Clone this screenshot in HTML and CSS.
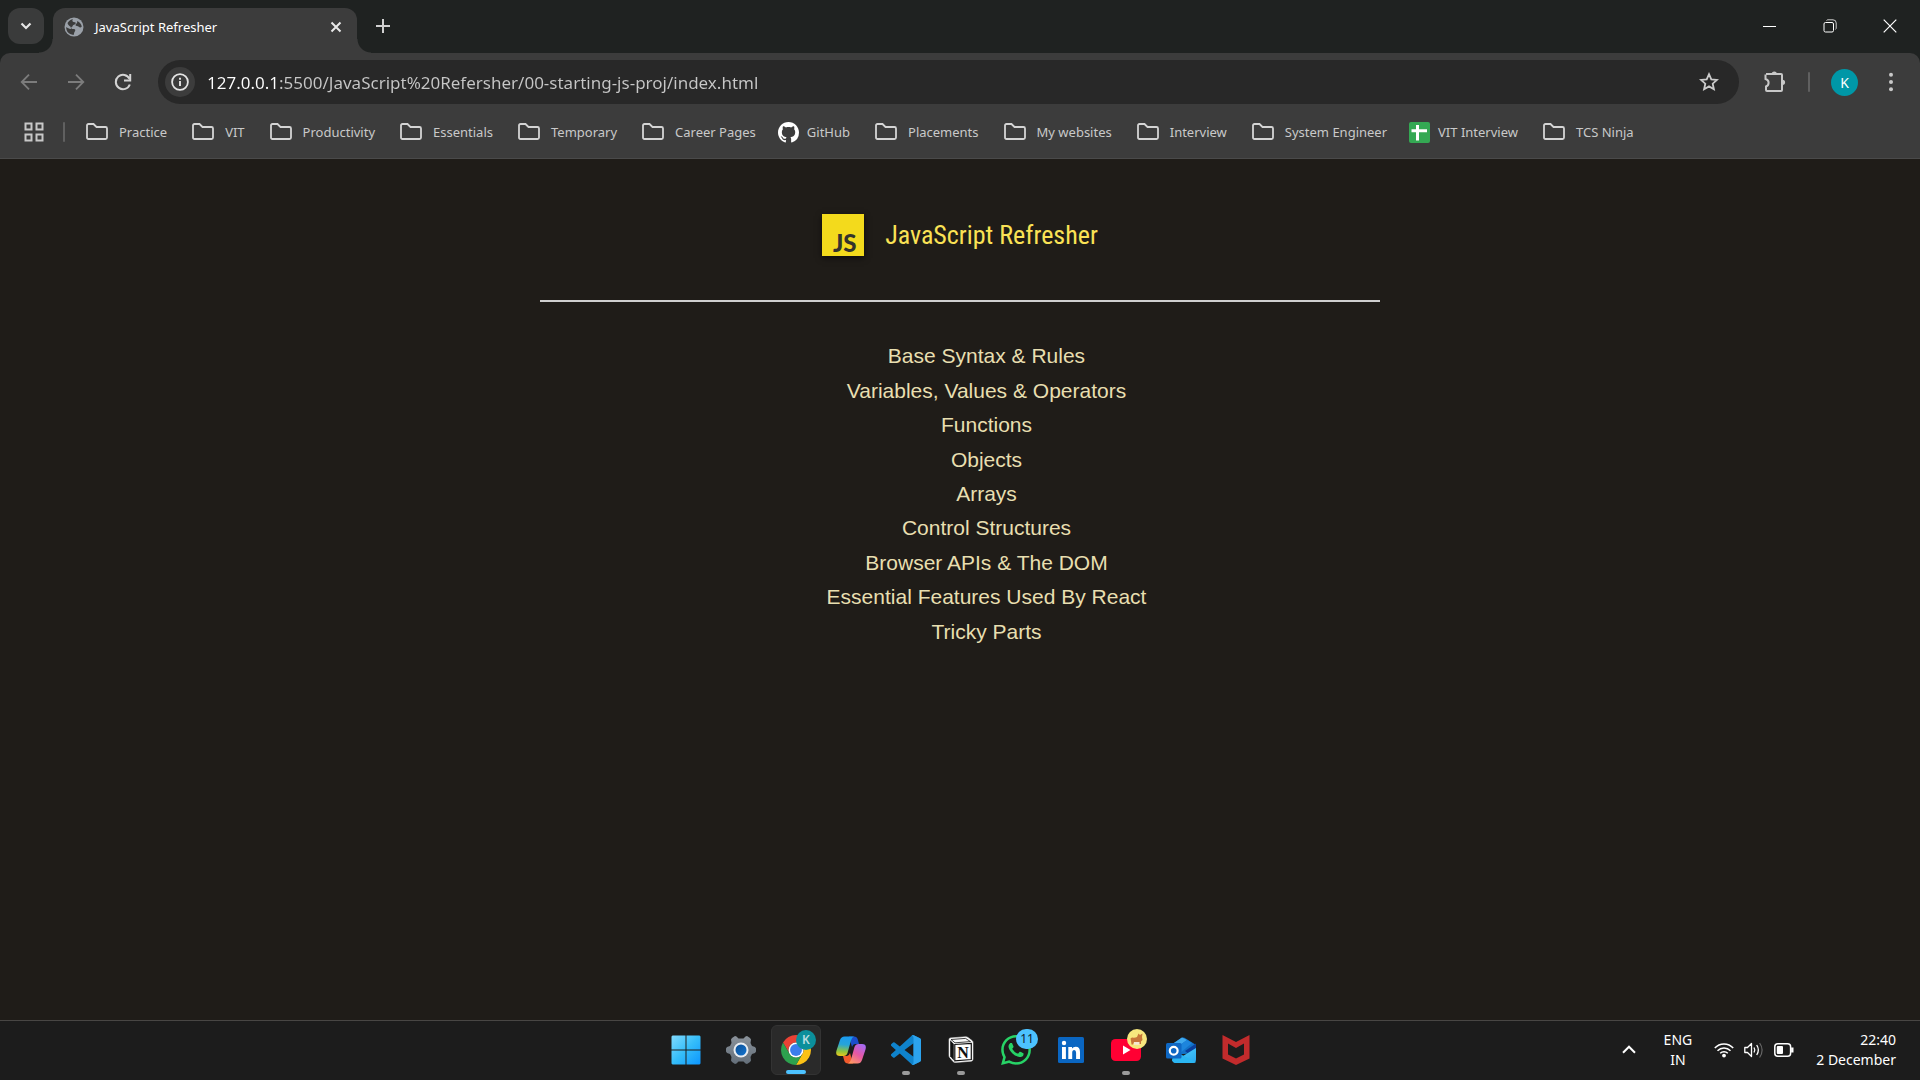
FILE: index.html
```html
<!DOCTYPE html>
<html lang="en">
<head>
<meta charset="utf-8">
<title>JavaScript Refresher</title>
<link rel="stylesheet" href="styles.css">
</head>
<body>
<svg class="defs" aria-hidden="true">
  <symbol id="folder" viewBox="0 0 28 22"><path d="M4 16.500V4.500Q4 3 5.500 3H10.500L13.500 6H22.500Q24 6 24 7.500V16.500Q24 18 22.500 18H5.500Q4 18 4 16.500Z" fill="none" stroke="#d4d4d4" stroke-width="1.800"/></symbol>
</svg>

<header class="browser">
  <div class="tabstrip">
    <button class="tab-search" aria-label="Search tabs"><svg width="12" height="8" viewBox="0 0 12 8"><path d="M1.500 1.500 6 6l4.500-4.500" fill="none" stroke="#e6e6e6" stroke-width="2.200"/></svg></button>
    <div class="tab">
      <svg width="20" height="20" viewBox="0 0 20 20"><circle cx="10" cy="10" r="9.500" fill="#9aa0a8"/><path d="M9 2.200C7.500 4 8.500 5 11 5.200c1.500.3.500 2.300-1 2.500-2 .2-.5 2-2.500 2.200-1.800.2-.5 2 1.500 2 3 0 2.500 1.500 1.500 3-.6 1-.2 2-1 3C4.500 17.500 2 14 2.200 10c2 1.200 4.500 3 5.500 1.200C7.500 9.500 4.500 9.500 3.500 6 5 3.500 7 2.400 9 2.200Z" fill="#3c3c3c"/><path d="M13 4c2 .5 4.500 3 4.800 5.500-1 1.500-2.300 1-3 .3-1-1-2.800-.5-3.300-1.500C11.500 6.500 14 6.500 13 4Z" fill="#3c3c3c"/></svg>
      <span class="tab-title">JavaScript Refresher</span>
      <button class="tab-close" aria-label="Close tab"><svg width="12" height="12" viewBox="0 0 12 12"><path d="M1.500 1.500l9 9m0-9l-9 9" stroke="#e8e8e8" stroke-width="2"/></svg></button>
    </div>
    <button class="new-tab" aria-label="New tab"><svg width="14" height="14" viewBox="0 0 14 14"><path d="M7 0v14M0 7h14" stroke="#d0d0d0" stroke-width="2"/></svg></button>
    <div class="window-controls">
      <button aria-label="Minimize"><svg width="14" height="14" viewBox="0 0 14 14"><path d="M0 7.500h13" stroke="#fff"/></svg></button>
      <button aria-label="Restore"><svg width="14" height="14" viewBox="0 0 14 14"><rect x="1" y="3.500" width="9.500" height="9.500" rx="1.500" fill="none" stroke="#fff"/><path d="M3.500 1.500Q4 .8 5 .8H10Q13.200.8 13.200 4V9q0 1-.8 1.500" fill="none" stroke="#ccc"/></svg></button>
      <button aria-label="Close"><svg width="14" height="14" viewBox="0 0 14 14"><path d="M.7.7l12.600 12.600m0-12.600L.7 13.300" stroke="#fff" stroke-width="1.200"/></svg></button>
    </div>
  </div>

  <div class="chrome-panel">
    <div class="toolbar">
      <nav class="history">
        <button aria-label="Back" disabled><svg width="18" height="18" viewBox="0 0 18 18"><path d="M17 9H2M9 1.700 1.700 9 9 16.300" fill="none" stroke="#7c7c7c" stroke-width="1.800"/></svg></button>
        <button aria-label="Forward" disabled><svg width="18" height="18" viewBox="0 0 18 18"><path d="M1 9h15M9 1.700 16.300 9 9 16.300" fill="none" stroke="#7c7c7c" stroke-width="1.800"/></svg></button>
        <button aria-label="Reload"><svg width="18" height="18" viewBox="0 0 18 18"><path d="M15.800 11.500A7.200 7.200 0 1 1 15.500 5.800" fill="none" stroke="#d4d4d4" stroke-width="2"/><path d="M16.200 1v6.500H10" fill="none" stroke="#d4d4d4" stroke-width="2"/></svg></button>
      </nav>
      <div class="omnibox">
        <button class="site-info" aria-label="View site information"><svg width="18" height="18" viewBox="0 0 18 18"><circle cx="9" cy="9" r="7.900" fill="none" stroke="#e4e4e4" stroke-width="1.800"/><path d="M9 8v5M9 4.700v2" stroke="#e4e4e4" stroke-width="1.900"/></svg></button>
        <input class="address" type="text" aria-label="Address" value="127.0.0.1:5500/JavaScript%20Refersher/00-starting-js-proj/index.html">
        <button class="star" aria-label="Bookmark this tab"><svg width="20" height="20" viewBox="0 0 20 20"><path d="M10 2.200l2.300 5.200 5.600.5-4.200 3.800 1.200 5.600L10 14.400l-4.900 2.900 1.200-5.600L2.100 7.900l5.600-.5Z" fill="none" stroke="#cbcbcb" stroke-width="1.800"/></svg></button>
      </div>
      <div class="actions">
        <button aria-label="Extensions"><svg width="22" height="24" viewBox="0 0 22 24"><path d="M2 4H17Q18 4 18 5V20Q18 21 17 21H3Q2 21 2 20V16.500Q4.600 15.500 4.600 12.700T1.500 9V4.500" fill="none" stroke="#c8c8c8" stroke-width="2"/><path d="M7.700 4a2.600 2.600 0 0 1 5.200 0ZM18.500 9.700a2.600 2.600 0 0 1 0 5.200Z" fill="#c8c8c8"/></svg></button>
        <span class="divider"></span>
        <button class="avatar" aria-label="Profile">K</button>
        <button class="menu" aria-label="Menu"><svg width="6" height="20" viewBox="0 0 6 20"><g fill="#c8c8c8"><circle cx="3" cy="2.700" r="2"/><circle cx="3" cy="10" r="2"/><circle cx="3" cy="17.300" r="2"/></g></svg></button>
      </div>
    </div>

    <nav class="bookmarks" aria-label="Bookmarks">
      <button class="apps" aria-label="Apps"><svg width="20" height="20" viewBox="0 0 20 20"><g fill="none" stroke="#c8c8c8" stroke-width="2"><rect x="1.500" y="1.500" width="6" height="6"/><rect x="12.500" y="1.500" width="6" height="6"/><rect x="1.500" y="12.500" width="6" height="6"/><rect x="12.500" y="12.500" width="6" height="6"/></g></svg></button>
      <span class="divider"></span>
      <div class="bookmark-list">
        <a href="#"><svg width="28" height="22"><use href="#folder"/></svg>Practice</a>
        <a href="#"><svg width="28" height="22"><use href="#folder"/></svg>VIT</a>
        <a href="#"><svg width="28" height="22"><use href="#folder"/></svg>Productivity</a>
        <a href="#"><svg width="28" height="22"><use href="#folder"/></svg>Essentials</a>
        <a href="#"><svg width="28" height="22"><use href="#folder"/></svg>Temporary</a>
        <a href="#"><svg width="28" height="22"><use href="#folder"/></svg>Career Pages</a>
        <a href="#"><svg width="21" height="21" viewBox="0 0 16 16"><path fill="#fff" d="M8 0C3.580 0 0 3.580 0 8c0 3.540 2.290 6.530 5.470 7.590.4.070.55-.17.55-.38 0-.19-.01-.82-.01-1.490-2.010.37-2.530-.49-2.690-.94-.09-.23-.48-.94-.82-1.130-.28-.15-.68-.52-.01-.53.63-.01 1.080.58 1.230.82.72 1.210 1.870.87 2.330.66.070-.52.280-.87.510-1.070-1.780-.2-3.640-.89-3.640-3.950 0-.87.310-1.590.82-2.150-.08-.2-.36-1.020.08-2.120 0 0 .67-.21 2.200.82.64-.18 1.320-.27 2-.27s1.360.09 2 .27c1.530-1.040 2.200-.82 2.200-.82.44 1.100.16 1.920.08 2.120.51.56.82 1.270.82 2.150 0 3.070-1.870 3.750-3.650 3.950.29.25.54.73.54 1.480 0 1.070-.01 1.930-.01 2.200 0 .21.15.46.55.38A8.010 8.010 0 0 0 16 8c0-4.420-3.580-8-8-8Z"/></svg>GitHub</a>
        <a href="#"><svg width="28" height="22"><use href="#folder"/></svg>Placements</a>
        <a href="#"><svg width="28" height="22"><use href="#folder"/></svg>My websites</a>
        <a href="#"><svg width="28" height="22"><use href="#folder"/></svg>Interview</a>
        <a href="#"><svg width="28" height="22"><use href="#folder"/></svg>System Engineer</a>
        <a href="#"><svg width="21" height="21" viewBox="0 0 21 21"><rect width="21" height="21" rx="2" fill="#34a853"/><path d="M8.500 3v15.500M2.500 8.700h15.500" stroke="#fff" stroke-width="3"/></svg>VIT Interview</a>
        <a href="#"><svg width="28" height="22"><use href="#folder"/></svg>TCS Ninja</a>
      </div>
    </nav>
  </div>
</header>

<main class="page">
  <div class="page-header">
    <svg class="js-logo" width="42" height="42" viewBox="0 0 42 42" role="img" aria-label="JavaScript logo"><rect width="42" height="42" fill="#f3da1c"/><text x="11" y="38" class="js-text">JS</text></svg>
    <h1>JavaScript Refresher</h1>
  </div>
  <ul class="topics">
    <li>Base Syntax &amp; Rules</li>
    <li>Variables, Values &amp; Operators</li>
    <li>Functions</li>
    <li>Objects</li>
    <li>Arrays</li>
    <li>Control Structures</li>
    <li>Browser APIs &amp; The DOM</li>
    <li>Essential Features Used By React</li>
    <li>Tricky Parts</li>
  </ul>
</main>

<footer class="taskbar">
  <div class="pinned">
    <button class="app" aria-label="Start"><svg width="30" height="30" viewBox="0 0 30 30"><defs><linearGradient id="win" gradientUnits="userSpaceOnUse" x1="0" y1="0" x2="30" y2="30"><stop offset="0" stop-color="#84dcff"/><stop offset=".5" stop-color="#35bdf9"/><stop offset="1" stop-color="#0a94ff"/></linearGradient></defs><path fill="url(#win)" d="M1.500.500h13v14h-14v-13zM15.500.500h13l1 1v13h-14zM.500 15.500h14v14h-13l-1-1zM15.500 15.500h14v13l-1 1h-13z"/></svg></button>
    <button class="app" aria-label="Settings"><svg width="32" height="32" viewBox="-16 -16 32 32"><defs><linearGradient id="gear" gradientUnits="userSpaceOnUse" x1="0" y1="-15" x2="0" y2="15"><stop offset="0" stop-color="#8b939b"/><stop offset="1" stop-color="#626d78"/></linearGradient><linearGradient id="hub" x1="0" y1="0" x2="1" y2="1"><stop offset="0" stop-color="#0c4f94"/><stop offset="1" stop-color="#1374cf"/></linearGradient></defs><path fill="url(#gear)" d="M-15 -1.500V1.500L-14 3-11 4-9.500 7-10 10.500-9 12-6 14-4.500 13.500-2.500 11.500H2.500L4.500 13.500 6 14 9 12 10 10.500 9.500 7 11 4 14 3 15 1.500V-1.500L14-3 11-4 9.500-7 10-10.500 9-12 6-14 4.500-13.500 2.500-11.500H-2.500L-4.500-13.500-6-14-9-12-10-10.500-9.500-7-11-4-14-3Z"/><circle r="7.500" fill="#e9edf1"/><circle r="5.500" fill="url(#hub)"/></svg></button>
    <button class="app active running" aria-label="Google Chrome"><svg width="30" height="30" viewBox="2 2 44 44"><path fill="#e94235" d="M43.050 13H24a11 11 0 0 0-9.530 16.500L4.950 13a22 22 0 0 1 38.100 0Z"/><path fill="#fbc116" d="M43.050 13A22 22 0 0 1 24 46l9.530-16.500A11 11 0 0 0 24 13Z"/><path fill="#2da14e" d="M24 46A22 22 0 0 1 4.950 13l9.520 16.500a11 11 0 0 0 19.060 0Z"/><circle cx="24" cy="24" r="11" fill="#fff"/><circle cx="24" cy="24" r="8.700" fill="#3b7ded"/></svg><span class="badge profile">K</span></button>
    <button class="app" aria-label="Copilot"><svg width="30" height="28" viewBox="0 0 30 28"><defs><linearGradient id="cpA" x1=".3" y1="0" x2=".2" y2="1"><stop offset="0" stop-color="#1a9bf0"/><stop offset=".4" stop-color="#27a4d8"/><stop offset=".75" stop-color="#8fc43e"/><stop offset="1" stop-color="#eec71a"/></linearGradient><linearGradient id="cpB" x1=".8" y1="0" x2=".2" y2="1"><stop offset="0" stop-color="#a56bf5"/><stop offset=".5" stop-color="#e657a4"/><stop offset="1" stop-color="#ff9a62"/></linearGradient></defs><path d="M13 .5h5q3 0 3.800 3L23 8h-4q-2 0-3 3Z" fill="#1b4ecb"/><path d="M17 27.500h-5q-3 0-3.800-3L7 20h4q2 0 3-3Z" fill="#f15a2c"/><path d="M8.500.5H18q-2 .5-3 4L11.500 17q-1 3-4 3H4Q-1 20 .500 14.500L4 4Q5.200.500 8.500.500Z" fill="url(#cpA)"/><path d="M21.500 27.500H12q2-.5 3-4L18.500 11q1-3 4-3H26q5 0 3.500 5.500L26 24q-1.200 3.500-4.500 3.500Z" fill="url(#cpB)"/></svg></button>
    <button class="app running" aria-label="Visual Studio Code"><svg width="30" height="30" viewBox="0 0 24 24"><path fill="#0f83cc" d="M23.150 2.587L18.210.210a1.494 1.494 0 0 0-1.705.290l-9.460 8.630-4.120-3.128a.999.999 0 0 0-1.276.057L.327 7.261A1 1 0 0 0 .326 8.740L3.899 12 .326 15.260a1 1 0 0 0 .001 1.479L1.650 17.940a.999.999 0 0 0 1.276.057l4.120-3.128 9.460 8.630a1.492 1.492 0 0 0 1.704.290l4.942-2.377A1.500 1.500 0 0 0 24 20.060V3.939a1.500 1.500 0 0 0-.850-1.352zm-5.146 14.861L10.826 12l7.178-5.448v10.896z"/><path fill="#2ca3ee" d="M18.210.210 23.150 2.587Q24 3 24 3.939V20.060Q24 21 23.150 21.400L18.210 23.790Q17.200 24.100 16.500 23.500 18 23.500 18 22V2Q18 .500 16.500.500 17.200-.100 18.210.210Z"/></svg></button>
    <button class="app running" aria-label="Notion"><svg width="26" height="28" viewBox="0 0 26 28"><path d="M1 3.500Q1 2 2.500 1.900L17.500.800Q19 .700 20 1.500L24 4.500Q25 5.300 25 6.500V23Q25 25 23.300 25.200L7.500 26.500Q6 26.600 5 25.500L1.700 21.500Q1 20.500 1 19.500Z" fill="#fff" stroke="#ddd" stroke-width=".6"/><path d="M3 3.500 17.500 2.400 22.500 5.600 7 6.800Z" fill="#f8f8f8" stroke="#111" stroke-width=".8"/><path d="M2.200 4.200 5.800 8V24.500L2.200 20.300Z" fill="#111"/><path d="M6.800 8.500 23.300 7.300V23.500L6.800 24.800Z" fill="#fff" stroke="#111" stroke-width="1.200"/><text x="15" y="21.500" class="notion-n">N</text></svg></button>
    <button class="app" aria-label="WhatsApp"><svg width="30" height="30" viewBox="0 0 24 24"><path fill="#27d366" d="M17.472 14.382c-.297-.149-1.758-.867-2.030-.967-.273-.099-.471-.148-.670.150-.197.297-.767.966-.940 1.164-.173.199-.347.223-.644.075-.297-.150-1.255-.463-2.390-1.475-.883-.788-1.480-1.761-1.653-2.059-.173-.297-.018-.458.130-.606.134-.133.298-.347.446-.520.149-.174.198-.298.298-.497.099-.198.050-.371-.025-.520-.075-.149-.669-1.612-.916-2.207-.242-.579-.487-.500-.669-.510-.173-.008-.371-.010-.570-.010-.198 0-.520.074-.792.372-.272.297-1.040 1.016-1.040 2.479 0 1.462 1.065 2.875 1.213 3.074.149.198 2.096 3.200 5.077 4.487.709.306 1.262.489 1.694.625.712.227 1.360.195 1.871.118.571-.085 1.758-.719 2.006-1.413.248-.694.248-1.289.173-1.413-.074-.124-.272-.198-.570-.347m-5.421 7.403h-.004a9.870 9.870 0 0 1-5.031-1.378l-.361-.214-3.741.982.998-3.648-.235-.374a9.860 9.860 0 0 1-1.510-5.260c.001-5.450 4.436-9.884 9.888-9.884 2.640 0 5.122 1.030 6.988 2.898a9.825 9.825 0 0 1 2.893 6.994c-.003 5.450-4.437 9.884-9.885 9.884m8.413-18.297A11.815 11.815 0 0 0 12.050 0C5.495 0 .160 5.335.157 11.892c0 2.096.547 4.142 1.588 5.945L.057 24l6.305-1.654a11.882 11.882 0 0 0 5.683 1.448h.005c6.554 0 11.890-5.335 11.893-11.893a11.821 11.821 0 0 0-3.480-8.413z"/></svg><span class="badge count">11</span></button>
    <button class="app" aria-label="LinkedIn"><svg width="26" height="26" viewBox="0 0 26 26"><rect width="26" height="26" rx="1.500" fill="#0a66c2"/><circle cx="6" cy="6" r="2.200" fill="#fff"/><path fill="#fff" d="M4 10h3.900v12H4zM10.300 10H14v1.600Q15.200 9.700 17.700 9.700 22 9.700 22 15V22H18.100V15.800Q18.100 13 16.200 13 14.200 13 14.200 15.800V22H10.300Z"/></svg></button>
    <button class="app running" aria-label="YouTube"><svg width="30" height="22" viewBox="0 0 30 22"><rect width="30" height="22" rx="4.500" fill="#ff0033"/><path d="M12 6.500v9l7.500-4.500z" fill="#fff"/></svg><span class="badge"><svg width="20" height="20" viewBox="0 0 20 20"><circle cx="10" cy="10" r="10" fill="#f7e77e"/><path d="M3.500 9.500 5 8.500Q8 9 10 8L11.500 4.500 13 6 15.500 4.500 15 8 15.500 11 14 12.500V15H12L11.500 13H7L6 15.500H4.500L4 12Z" fill="#c8763a"/><path d="M7 13h5.500v2.800H7Z" fill="#f6ead0"/></svg></span></button>
    <button class="app" aria-label="Outlook"><svg width="30" height="26" viewBox="0 0 30 26"><defs><linearGradient id="ol" x1="0" y1="0" x2="1" y2="1"><stop offset="0" stop-color="#50d9ff"/><stop offset="1" stop-color="#2aa5ee"/></linearGradient></defs><path d="M5 8 15.500.800Q17 0 18.500.800L28.500 7Q30 8 30 10V16L5 18Z" fill="#1273c9"/><path d="M5 8 16 .500 21 3 7 13Z" fill="#3fa9ee"/><path d="M19 14 30 6.500V12L24 18Z" fill="#0b3f9c"/><path d="M7 13 21 3 26 6 13 17Z" fill="#1d85dd"/><path d="M30 11V22.500Q30 26 26.500 26H10Q7 26 6 23L17 19Z" fill="url(#ol)"/><path d="M8 14 30 25Q29 26 26.500 26H10Q7 26 6 23Z" fill="#2bb6f2"/><rect y="6" width="15.500" height="15.500" rx="1.500" fill="#0f68c4"/><circle cx="7.700" cy="13.700" r="3.900" fill="none" stroke="#fff" stroke-width="2.200"/></svg></button>
    <button class="app" aria-label="McAfee"><svg width="28" height="30" viewBox="0 0 28 30"><path fill="#c22b2c" fill-rule="evenodd" d="M.5 0 14 7 27.500 0V23.500L14 30 .500 23.500ZM6 8.500V19.500L14 23.500 22 19.500V8.500L14 13Z"/></svg></button>
  </div>
  <div class="tray">
    <button aria-label="Show hidden icons"><svg width="14" height="9" viewBox="0 0 14 9"><path d="M1 7.700 7 1.700l6 6" fill="none" stroke="#fff" stroke-width="2"/></svg></button>
    <button class="lang"><span>ENG</span><span>IN</span></button>
    <button class="status" aria-label="Network, volume and battery">
      <svg width="20" height="16" viewBox="0 0 20 16"><g fill="none" stroke="#fff" stroke-width="1.500"><path d="M.8 6a12.500 12.500 0 0 1 18.400 0M3.500 8.700a9 9 0 0 1 13 0M6.200 11.300a5.300 5.300 0 0 1 7.600 0"/></g><circle cx="10" cy="13.600" r="1.900" fill="#fff"/></svg>
      <svg width="20" height="18" viewBox="0 0 20 18"><path d="M.8 6.500H3.500L7.500 2.500V15.500L3.500 11.500H.800Z" fill="none" stroke="#fff" stroke-width="1.300" stroke-linejoin="round"/><path d="M10 6.500q1.600 2.500 0 5M12.700 4q3.300 5 0 10" fill="none" stroke="#fff" stroke-width="1.300"/><path d="M15.600 2q5 7 0 14.500" fill="none" stroke="#666" stroke-width="1.200"/></svg>
      <svg width="20" height="14" viewBox="0 0 20 14"><rect x=".8" y=".8" width="15.800" height="12.400" rx="3" fill="none" stroke="#fff" stroke-width="1.500"/><rect x="2.800" y="3" width="6.200" height="8" rx="1" fill="#fff"/><path d="M18.300 4.500v5" stroke="#fff" stroke-width="2.400"/></svg>
    </button>
    <button class="clock"><span>22:40</span><span>2 December</span></button>
  </div>
</footer>
</body>
</html>
```
FILE: styles.css
```css
* {
  box-sizing: border-box;
}

body {
  margin: 0;
  min-height: 100vh;
  display: flex;
  flex-direction: column;
  background: #1f1c18;
  color: #fff;
  font-family: "Noto Sans", "Open Sans", sans-serif;
}

button {
  display: flex;
  align-items: center;
  justify-content: center;
  margin: 0;
  padding: 0;
  border: 0;
  background: none;
  color: inherit;
  font: inherit;
}

svg {
  display: block;
  flex: none;
}

.defs {
  position: absolute;
  width: 0;
  height: 0;
}

/* Browser window frame */
.browser {
  background: #1f2221;
}

.tabstrip {
  display: flex;
  align-items: flex-start;
  height: 53px;
  padding: 8px 0 0 8px;
}

.tab-search {
  width: 36px;
  height: 36px;
  margin-right: 9px;
  border-radius: 12px;
  background: #3a3b3b;
}

.tab {
  position: relative;
  display: flex;
  align-items: center;
  width: 304px;
  height: 45px;
  padding: 0 15px 8px 11px;
  border-radius: 12px 12px 0 0;
  background: #3c3c3c;
  font-size: 13px;
}

.tab::before,
.tab::after {
  content: "";
  position: absolute;
  bottom: 0;
  width: 14px;
  height: 14px;
}

.tab::before {
  left: -14px;
  background: radial-gradient(circle at 0 0, transparent 13px, #3c3c3c 14px);
}

.tab::after {
  right: -14px;
  background: radial-gradient(circle at 100% 0, transparent 13px, #3c3c3c 14px);
}

.tab-title {
  flex: 1;
  margin-left: 11px;
}

.new-tab {
  width: 36px;
  height: 36px;
  margin-left: 8px;
}

.window-controls {
  display: flex;
  margin-left: auto;
}

.window-controls button {
  width: 60px;
  height: 36px;
}

.chrome-panel {
  border-bottom: 1px solid #4a4a4a;
  border-radius: 10px 10px 0 0;
  background: #3c3c3c;
}

.toolbar {
  display: flex;
  align-items: center;
  padding: 7px 26px 0 20px;
}

.history {
  display: flex;
  gap: 29px;
  margin-right: 26px;
}

.omnibox {
  flex: 1;
  display: flex;
  align-items: center;
  height: 44px;
  padding: 0 20px 0 7px;
  border-radius: 22px;
  background: #282828;
}

.site-info {
  width: 30px;
  height: 30px;
  border-radius: 50%;
  background: #3c3c3c;
}

.address {
  flex: 1;
  height: 30px;
  margin-left: 12px;
  padding: 0;
  border: 0;
  outline: 0;
  background: linear-gradient(90deg, #ffffff 72px, #c7c7c7 72px);
  background-clip: text;
  -webkit-background-clip: text;
  color: transparent;
  font: 17px "Noto Sans", "Open Sans", sans-serif;
}

.actions {
  display: flex;
  align-items: center;
  margin-left: 25px;
}

.divider {
  width: 2px;
  height: 20px;
  border-radius: 1px;
  background: #606060;
}

.actions .divider {
  margin: 0 21px 0 22px;
}

.avatar {
  width: 27px;
  height: 27px;
  border-radius: 50%;
  background: #0097a7;
  font-size: 14px;
}

.menu {
  margin-left: 30px;
}

.bookmarks {
  display: flex;
  align-items: center;
  height: 54px;
  padding: 2px 20px 0 24px;
}

.apps {
  margin-right: 19px;
}

.bookmark-list {
  display: flex;
  gap: 22px;
  margin-left: 18px;
}

.bookmark-list a {
  display: flex;
  align-items: center;
  gap: 8px;
  height: 24px;
  color: #c9c9c9;
  font-size: 13px;
  white-space: nowrap;
  text-decoration: none;
}

/* Page content */
.page {
  flex: 1;
  width: 100%;
  max-width: 840px;
  margin: 0 auto;
  padding-top: 55px;
}

.page-header {
  display: flex;
  align-items: center;
  justify-content: center;
  gap: 21px;
  padding-bottom: 44px;
  border-bottom: 2px solid #cfcfcf;
}

.js-logo {
  box-shadow: 0 2px 6px rgba(0, 0, 0, 0.6);
}

.js-text {
  fill: #33332c;
  font: 900 24px Lato, sans-serif;
}

h1 {
  margin: 0;
  color: #fae255;
  font: 400 26px/42px "Roboto Condensed", "Liberation Sans Narrow", Roboto, sans-serif;
}

.topics {
  display: grid;
  grid-auto-rows: 1fr;
  align-items: center;
  height: 310px;
  margin: 37px 0 0;
  padding: 0 0 0 53px;
  list-style: none;
  text-align: center;
  color: #e8dfb0;
  font: 21px/34px "Liberation Sans", Arial, sans-serif;
}

/* Taskbar */
.taskbar {
  display: grid;
  grid-template-columns: 1fr auto 1fr;
  align-items: center;
  height: 60px;
  padding-bottom: 2px;
  border-top: 1px solid #484644;
  background: #1c1c1c;
}

.pinned {
  grid-column: 2;
  display: flex;
  gap: 5px;
  padding-left: 2px;
}

.app {
  position: relative;
  width: 50px;
  height: 50px;
  border-radius: 6px;
}

.app.active {
  border: 1px solid #333;
  background: #2a2a2a;
}

.running::after {
  content: "";
  position: absolute;
  bottom: 0;
  left: calc(50% - 4px);
  width: 8px;
  height: 4px;
  border-radius: 2px;
  background: #9a9a9a;
}

.active.running::after {
  left: calc(50% - 10px);
  width: 20px;
  background: #4cc2ff;
}

.badge {
  position: absolute;
  top: 4px;
  right: 4px;
  display: flex;
  align-items: center;
  justify-content: center;
  min-width: 20px;
  height: 20px;
  border-radius: 10px;
  font-size: 12px;
  line-height: 20px;
}

.badge.profile {
  background: #0b8f9b;
  color: #b9dde0;
  font-weight: 600;
}

.badge.count {
  right: 3px;
  width: 22px;
  background: #4cc2ff;
  color: #10222e;
}

.notion-n {
  fill: #111;
  font: 700 16px "Liberation Serif", serif;
  text-anchor: middle;
}

.tray {
  grid-column: 3;
  justify-self: end;
  display: flex;
  align-items: center;
  padding-right: 24px;
  font-size: 14px;
  line-height: 20px;
}

.lang {
  flex-direction: column;
  margin: 0 22px 0 28px;
}

.status {
  gap: 10px;
}

.clock {
  flex-direction: column;
  align-items: flex-end;
  margin-left: 22px;
}
```
